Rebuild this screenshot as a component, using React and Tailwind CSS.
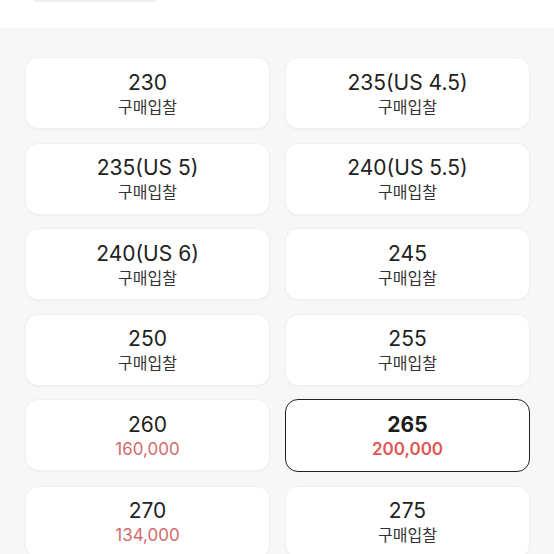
import React from "react";

const items = [
  { size: "230" },
  { size: "235(US 4.5)" },
  { size: "235(US 5)" },
  { size: "240(US 5.5)" },
  { size: "240(US 6)" },
  { size: "245" },
  { size: "250" },
  { size: "255" },
  { size: "260", price: "160,000" },
  { size: "265", price: "200,000", selected: true },
  { size: "270", price: "134,000" },
  { size: "275" },
];

const font = { fontFamily: '"Inter", "Noto Sans CJK KR", sans-serif' };

function Card({ size, price, selected }) {
  return (
    <div
      className={
        selected
          ? "h-[73px] pt-[3px] rounded-[13px] bg-white border-[1.75px] border-[#222222] flex flex-col items-center justify-center"
          : "h-[72px] pt-[3px] rounded-[13px] bg-white border border-[#f0f0f0] shadow-[0_1px_2px_rgba(0,0,0,0.03)] flex flex-col items-center justify-center"
      }
    >
      <div
        className={
          selected
            ? "text-[21px] leading-[25px] font-bold text-[#1c1c1c]"
            : "text-[21px] leading-[25px] text-[#222222]"
        }
      >
        {size}
      </div>
      {price ? (
        <div
          className={
            selected
              ? "text-[17px] leading-[25px] font-semibold text-[#df5753]"
              : "text-[17px] leading-[25px] text-[#d46a6c]"
          }
        >
          {price}
        </div>
      ) : (
        <div className="text-[16px] leading-[25px] text-[#333333]">구매입찰</div>
      )}
    </div>
  );
}

export default function App() {
  return (
    <div className="w-[554px] h-[554px] overflow-hidden bg-[#f7f7f7]" style={font}>
      <div className="h-[28px] bg-white relative">
        <div className="absolute left-[34px] top-0 w-[122px] h-[2px] bg-[#eeeeee] rounded-b" />
      </div>
      <div className="grid grid-cols-2 gap-x-[15px] gap-y-[13.5px] pl-[25px] pr-[24px] pt-[29px]">
        {items.map((it) => (
          <Card key={it.size} {...it} />
        ))}
      </div>
    </div>
  );
}
